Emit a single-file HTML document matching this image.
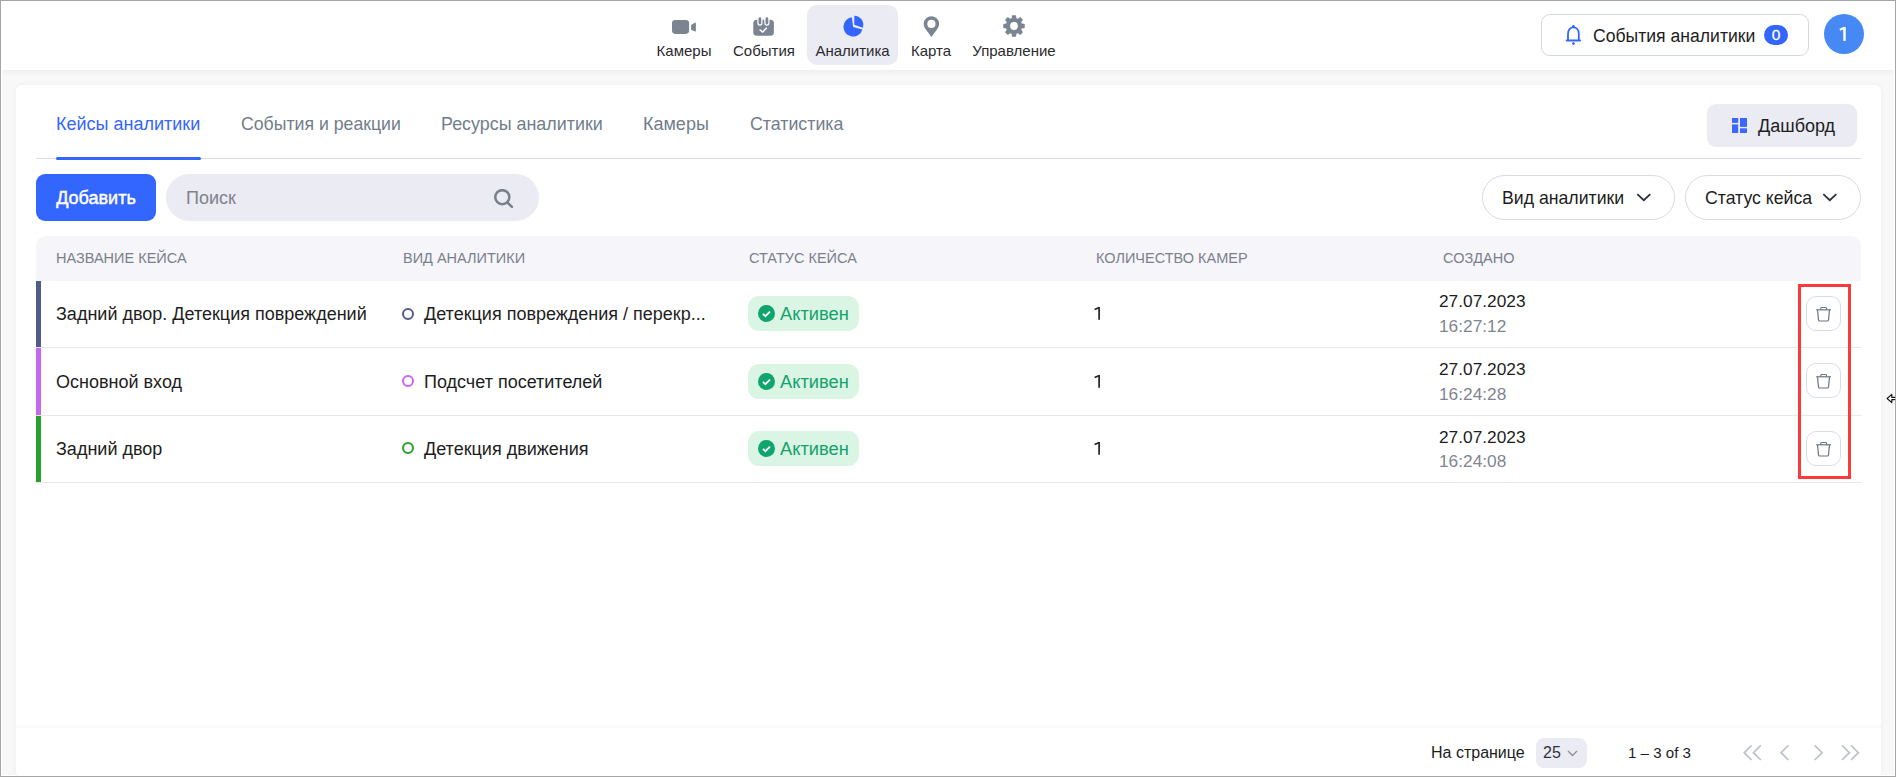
<!DOCTYPE html>
<html><head><meta charset="utf-8">
<style>
*{box-sizing:border-box;margin:0;padding:0}
html,body{width:1896px;height:777px;overflow:hidden}
body{font-family:"Liberation Sans",sans-serif;background:#f8f8f8;position:relative;color:#1d1d22}
.frame{position:absolute;left:0;top:0;width:1896px;height:777px;border:1px solid #a6a6a6;box-shadow:inset 0 0 0 1px #fff;pointer-events:none;z-index:50}
.header{position:absolute;left:0;top:0;width:1896px;height:70px;background:#fff;box-shadow:0 1px 6px rgba(0,0,0,.06);z-index:2}
.nav{position:absolute;top:5px;height:60px;border-radius:10px;text-align:center;font-size:15px;color:#2a2a30}
.nav.active{background:#ebebf4}
.ic{position:absolute}
.nav span{position:absolute;left:0;right:0;top:37px;line-height:17px;white-space:nowrap}
.card{position:absolute;left:16px;top:85px;width:1865px;height:692px;background:#fff;border-radius:6px;box-shadow:0 0 5px rgba(0,0,0,.05)}
.t{position:absolute;white-space:nowrap;line-height:1}
.evbtn{position:absolute;left:1541px;top:14px;width:268px;height:42px;border:1px solid #d3d9e4;border-radius:9px;background:#fff}
.avatar{position:absolute;left:1824px;top:14px;width:40px;height:40px;border-radius:50%;background:#4689f5;color:#fff;font-size:20px;text-align:center;line-height:40px;text-indent:-2px}
.tab{position:absolute;top:115px;font-size:18px;color:#717d8b;line-height:18px;white-space:nowrap}
.tab.active{color:#3366ff}
.btn-add{position:absolute;left:36px;top:174px;width:120px;height:47px;border-radius:9px;background:#3366ff;color:#fff;font-size:18px;line-height:48px;text-align:center;-webkit-text-stroke:0.45px #fff;text-indent:0px}
.search{position:absolute;left:166px;top:174px;width:373px;height:47px;border-radius:24px;background:#ebebf3}
.dd{position:absolute;top:175px;height:45px;border:1px solid #d6dbe4;border-radius:23px;background:#fff;font-size:17.7px;color:#1d1d22}
.thead{position:absolute;left:36px;top:236px;width:1825px;height:45px;background:#f6f6fa;border-radius:10px 10px 0 0}
.th{position:absolute;top:251px;font-size:14.5px;color:#7b7f8a;line-height:14px;white-space:nowrap}
.row{position:absolute;left:36px;width:1825px;border-bottom:1px solid #e6e8ee}
.bar{position:absolute;left:0;top:0;width:5px;bottom:0}
.cell{position:absolute;font-size:18px;line-height:18px;white-space:nowrap;color:#1d1d22}
.badge{position:absolute;width:111px;height:35px;border-radius:11px;background:#dbf5e5}
.badge .ck{position:absolute;left:10px;top:9px;width:17px;height:17px;border-radius:50%;background:#10a56d}
.badge span{position:absolute;left:32px;top:9px;font-size:18.3px;line-height:18px;color:#13a26b}
.dot{position:absolute;width:12px;height:12px;border-radius:50%;border:2px solid}
.trash{position:absolute;left:1806px;width:35px;height:35px;border:1px solid #d8dee7;border-radius:10px;background:#fff}
.trash svg{position:absolute;left:9px;top:9px}
</style></head><body>
<div class="frame"></div>
<div class="header">
  <div class="nav" style="left:648px;width:72px"><span>Камеры</span></div>
  <div class="nav" style="left:726px;width:76px"><span>События</span></div>
  <div class="nav active" style="left:807px;width:91px"><span>Аналитика</span></div>
  <div class="nav" style="left:903px;width:56px"><span>Карта</span></div>
  <div class="nav" style="left:966px;width:96px"><span>Управление</span></div>
  <svg class="ic" style="left:668px;top:14px" width="32" height="26" viewBox="0 0 32 26"><rect x="4" y="6" width="17.1" height="13.9" rx="3.3" fill="#7b8592"/><path d="M23.1 11 L26.9 8.7 Q27.9 8.1 27.9 9.3 V16.8 Q27.9 18 26.9 17.4 L23.1 15.7 Z" fill="#7b8592"/></svg>
  <svg class="ic" style="left:753px;top:17px" width="22" height="22" viewBox="0 0 22 22"><rect x="0.3" y="2.7" width="20.6" height="16.1" rx="3.5" fill="#7b8592"/><path d="M6.9 1.5v4.6M13.9 1.5v4.6" stroke="#fff" stroke-width="5.2" stroke-linecap="round"/><path d="M6.9 1.7v4.4M13.9 1.7v4.4" stroke="#7b8592" stroke-width="2.8" stroke-linecap="round"/><path d="M6.6 12.7l3.1 2.4 4-4.4" stroke="#fff" stroke-width="1.5" fill="none"/></svg>
  <svg class="ic" style="left:842px;top:10px" width="24" height="30" viewBox="0 0 24 30"><path d="M11.1 16.9 L9.8 7.3 A9.7 9.7 0 1 0 20.4 19.6 Z" fill="#3366ff"/><path d="M12.3 14.8 L12.3 5.8 A9 9 0 0 1 20.8 17.7 Z" fill="#3366ff"/></svg>
  <svg class="ic" style="left:915px;top:12px" width="32" height="28" viewBox="0 0 32 28"><path fill-rule="evenodd" d="M16.4 24.9 L10.18 16.52 A7.75 7.75 0 1 1 22.62 16.52 Z M20.5 11.9 A4.1 4.1 0 1 0 12.3 11.9 A4.1 4.1 0 1 0 20.5 11.9 Z" fill="#7b8592"/></svg>
  <svg class="ic" style="left:1000px;top:12px" width="28" height="28" viewBox="0 0 28 28"><path fill-rule="evenodd" fill="#7b8592" d="M11.60 6.16 L12.01 3.28 L15.99 3.28 L16.40 6.16 L17.85 6.76 L20.17 5.02 L22.98 7.83 L21.24 10.15 L21.84 11.60 L24.72 12.01 L24.72 15.99 L21.84 16.40 L21.24 17.85 L22.98 20.17 L20.17 22.98 L17.85 21.24 L16.40 21.84 L15.99 24.72 L12.01 24.72 L11.60 21.84 L10.15 21.24 L7.83 22.98 L5.02 20.17 L6.76 17.85 L6.16 16.40 L3.28 15.99 L3.28 12.01 L6.16 11.60 L6.76 10.15 L5.02 7.83 L7.83 5.02 L10.15 6.76 Z M17.9 14 A3.9 3.9 0 1 0 10.1 14 A3.9 3.9 0 1 0 17.9 14 Z"/></svg>
  <div class="evbtn">
    <svg style="position:absolute;left:22px;top:9px" width="20" height="24" viewBox="0 0 20 24"><path d="M4 16.4V10C4 5.9 6.3 3.4 9.4 3.4S14.8 5.9 14.8 10v6.4" fill="none" stroke="#3366ff" stroke-width="1.8"/><path d="M2.7 16.5H16.1" stroke="#3366ff" stroke-width="1.9" stroke-linecap="round"/><circle cx="9.4" cy="2.3" r="1.3" fill="#3366ff"/><circle cx="9.4" cy="19.6" r="1.4" fill="#3366ff"/></svg>
    <div class="t" style="left:51px;top:13px;font-size:17.6px;color:#1d1d22">События аналитики</div>
    <div style="position:absolute;left:222px;top:10px;width:24px;height:20px;border-radius:10px;background:#3366ff;color:#fff;font-size:15.5px;line-height:19px;text-align:center;-webkit-text-stroke:0.3px #fff">0</div>
  </div>
  <div class="avatar"></div><svg class="ic" style="left:1834px;top:24px;z-index:3" width="18" height="20" viewBox="0 0 18 20"><path d="M10.5 3.1V16.9" stroke="#fff" stroke-width="2.5"/><path d="M5.8 5.8L10.6 3.8" stroke="#fff" stroke-width="2.1"/></svg>
</div>
<div class="card"></div>

<!-- tabs -->
<div class="tab active" style="left:56px">Кейсы аналитики</div>
<div class="tab" style="left:241px;font-size:17.7px">События и реакции</div>
<div class="tab" style="left:441px;font-size:17.9px">Ресурсы аналитики</div>
<div class="tab" style="left:643px">Камеры</div>
<div class="tab" style="left:750px;font-size:17.8px">Статистика</div>
<div style="position:absolute;left:36px;top:158px;width:1825px;height:1px;background:#d9dee6"></div>
<div style="position:absolute;left:56px;top:157px;width:145px;height:3px;border-radius:2px;background:#3366ff"></div>

<div style="position:absolute;left:1707px;top:104px;width:150px;height:43px;border-radius:9px;background:#ebebf4">
  <svg style="position:absolute;left:25px;top:14px" width="15" height="15" viewBox="0 0 15 15"><g fill="#3d66ff"><rect x="0" y="0" width="6.2" height="4.9"/><rect x="0" y="6.4" width="6.2" height="8.6"/><rect x="8" y="0" width="7" height="8.9"/><rect x="8" y="10.3" width="7" height="4.7"/></g></svg>
  <div class="t" style="left:51px;top:13px;font-size:18px;color:#1d1d22">Дашборд</div>
</div>

<!-- toolbar -->
<div class="btn-add">Добавить</div>
<div class="search">
  <div class="t" style="left:20px;top:15px;font-size:18px;color:#7d828c">Поиск</div>
  <svg style="position:absolute;left:327px;top:15px" width="22" height="22" viewBox="0 0 22 22"><circle cx="9.3" cy="8.2" r="7.05" fill="none" stroke="#77808b" stroke-width="2.5"/><path d="M14.4 13.5L18.9 17.9" stroke="#77808b" stroke-width="2.5" stroke-linecap="round"/></svg>
</div>
<div class="dd" style="left:1482px;width:193px">
  <div class="t" style="left:19px;top:14px">Вид аналитики</div>
  <svg style="position:absolute;left:153px;top:16px" width="16" height="10" viewBox="0 0 16 10"><path d="M1.3 2.2L7.8 8.2 14.3 2.2" fill="none" stroke="#2c303a" stroke-width="1.75"/></svg>
</div>
<div class="dd" style="left:1685px;width:176px">
  <div class="t" style="left:19px;top:14px">Статус кейса</div>
  <svg style="position:absolute;left:136px;top:16px" width="16" height="10" viewBox="0 0 16 10"><path d="M1.3 2.2L7.8 8.2 14.3 2.2" fill="none" stroke="#2c303a" stroke-width="1.75"/></svg>
</div>

<!-- table header -->
<div class="thead"></div>
<div class="th" style="left:56px">НАЗВАНИЕ КЕЙСА</div>
<div class="th" style="left:403px">ВИД АНАЛИТИКИ</div>
<div class="th" style="left:749px">СТАТУС КЕЙСА</div>
<div class="th" style="left:1096px">КОЛИЧЕСТВО КАМЕР</div>
<div class="th" style="left:1443px">СОЗДАНО</div>

<!-- rows -->
<div class="row" style="top:281px;height:67px"><div class="bar" style="background:#525b8e"></div></div>
<div class="row" style="top:348px;height:68px"><div class="bar" style="background:#c867f2"></div></div>
<div class="row" style="top:416px;height:67px"><div class="bar" style="background:#27a22f"></div></div>

<div class="cell" style="left:56px;top:305px">Задний двор. Детекция повреждений</div>
<div class="dot" style="left:402px;top:308px;border-color:#525b8e"></div>
<div class="cell" style="left:424px;top:305px">Детекция повреждения / перекр...</div>
<div class="badge" style="left:748px;top:296px"><div class="ck"><svg width="17" height="17" viewBox="0 0 17 17"><path d="M5 8.8l2.4 2.4 4.6-4.6" fill="none" stroke="#fff" stroke-width="1.8"/></svg></div><span>Активен</span></div>
<svg style="position:absolute;left:1092px;top:305px" width="10" height="16" viewBox="0 0 10 16"><path d="M7.1 2.1V14.8" stroke="#1d1d22" stroke-width="1.65"/><path d="M2.6 4.5L7.3 2.5" stroke="#1d1d22" stroke-width="1.4"/></svg>
<div class="cell" style="left:1439px;top:292px;font-size:17.3px">27.07.2023</div>
<div class="cell" style="left:1439px;top:317px;font-size:17.3px;color:#7f8691">16:27:12</div>
<div class="trash" style="top:296px"><svg width="16" height="17" viewBox="0 0 16 17"><g fill="none" stroke="#6c7380" stroke-width="1.2"><path d="M0.2 3.8H15"/><path d="M4.8 3.6V2.4c0-.6.3-.9.9-.9h4c.6 0 .9.3.9.9v1.2"/><path d="M1.5 4l1 9.9c.1.8.5 1.1 1.2 1.1h7.6c.7 0 1.1-.3 1.2-1.1l1-9.9"/></g></svg></div>

<div class="cell" style="left:56px;top:373px">Основной вход</div>
<div class="dot" style="left:402px;top:375px;border-color:#c867f2"></div>
<div class="cell" style="left:424px;top:373px">Подсчет посетителей</div>
<div class="badge" style="left:748px;top:364px"><div class="ck"><svg width="17" height="17" viewBox="0 0 17 17"><path d="M5 8.8l2.4 2.4 4.6-4.6" fill="none" stroke="#fff" stroke-width="1.8"/></svg></div><span>Активен</span></div>
<svg style="position:absolute;left:1092px;top:373px" width="10" height="16" viewBox="0 0 10 16"><path d="M7.1 2.1V14.8" stroke="#1d1d22" stroke-width="1.65"/><path d="M2.6 4.5L7.3 2.5" stroke="#1d1d22" stroke-width="1.4"/></svg>
<div class="cell" style="left:1439px;top:360px;font-size:17.3px">27.07.2023</div>
<div class="cell" style="left:1439px;top:385px;font-size:17.3px;color:#7f8691">16:24:28</div>
<div class="trash" style="top:363px"><svg width="16" height="17" viewBox="0 0 16 17"><g fill="none" stroke="#6c7380" stroke-width="1.2"><path d="M0.2 3.8H15"/><path d="M4.8 3.6V2.4c0-.6.3-.9.9-.9h4c.6 0 .9.3.9.9v1.2"/><path d="M1.5 4l1 9.9c.1.8.5 1.1 1.2 1.1h7.6c.7 0 1.1-.3 1.2-1.1l1-9.9"/></g></svg></div>

<div class="cell" style="left:56px;top:440px">Задний двор</div>
<div class="dot" style="left:402px;top:442px;border-color:#27a22f"></div>
<div class="cell" style="left:424px;top:440px">Детекция движения</div>
<div class="badge" style="left:748px;top:431px"><div class="ck"><svg width="17" height="17" viewBox="0 0 17 17"><path d="M5 8.8l2.4 2.4 4.6-4.6" fill="none" stroke="#fff" stroke-width="1.8"/></svg></div><span>Активен</span></div>
<svg style="position:absolute;left:1092px;top:440px" width="10" height="16" viewBox="0 0 10 16"><path d="M7.1 2.1V14.8" stroke="#1d1d22" stroke-width="1.65"/><path d="M2.6 4.5L7.3 2.5" stroke="#1d1d22" stroke-width="1.4"/></svg>
<div class="cell" style="left:1439px;top:428px;font-size:17.3px">27.07.2023</div>
<div class="cell" style="left:1439px;top:452px;font-size:17.3px;color:#7f8691">16:24:08</div>
<div class="trash" style="top:431px"><svg width="16" height="17" viewBox="0 0 16 17"><g fill="none" stroke="#6c7380" stroke-width="1.2"><path d="M0.2 3.8H15"/><path d="M4.8 3.6V2.4c0-.6.3-.9.9-.9h4c.6 0 .9.3.9.9v1.2"/><path d="M1.5 4l1 9.9c.1.8.5 1.1 1.2 1.1h7.6c.7 0 1.1-.3 1.2-1.1l1-9.9"/></g></svg></div>

<!-- red highlight -->
<div style="position:absolute;left:1798px;top:284px;width:53px;height:195px;border:3px solid #fb3b3b;z-index:5"></div>

<!-- cursor -->
<svg style="position:absolute;left:1885px;top:392px;z-index:60" width="10" height="13" viewBox="0 0 10 13"><path d="M2.1 6.5L6.8 2.3V5.4H12V7.6H6.8V10.7Z" fill="#fff" stroke="#111" stroke-width="1.1" stroke-linejoin="round"/></svg>

<!-- footer -->
<div style="position:absolute;left:16px;top:724px;width:1865px;height:4px;background:linear-gradient(to bottom,rgba(0,0,0,0),rgba(0,0,0,0.03))"></div>
<div class="t" style="left:1431px;top:745px;font-size:16px;color:#1d1d22">На странице</div>
<div style="position:absolute;left:1536px;top:738px;width:51px;height:30px;border-radius:8px;background:#ebebf4">
  <div class="t" style="left:7px;top:7px;font-size:16px;color:#30323a">25</div>
  <svg style="position:absolute;left:31px;top:12px" width="11" height="7" viewBox="0 0 11 7"><path d="M1 1l4.5 4.5L10 1" fill="none" stroke="#8a8f99" stroke-width="1.3"/></svg>
</div>
<div class="t" style="left:1628px;top:745px;font-size:15.1px;color:#1d1d22">1 – 3 of 3</div>
<svg style="position:absolute;left:1741px;top:745px" width="120" height="16" viewBox="0 0 120 16">
  <g fill="none" stroke="#bcc2ca" stroke-width="1.7">
    <path d="M10.6 0.4L3.2 7.7 10.6 15M19.8 0.4L12.4 7.7 19.8 15"/>
    <path d="M47.4 0.4L40 7.7 47.4 15"/>
    <path d="M73.7 0.4L81.1 7.7 73.7 15"/>
    <path d="M101 0.4L108.4 7.7 101 15M110 0.4L117.4 7.7 110 15"/>
  </g>
</svg>
</body></html>
